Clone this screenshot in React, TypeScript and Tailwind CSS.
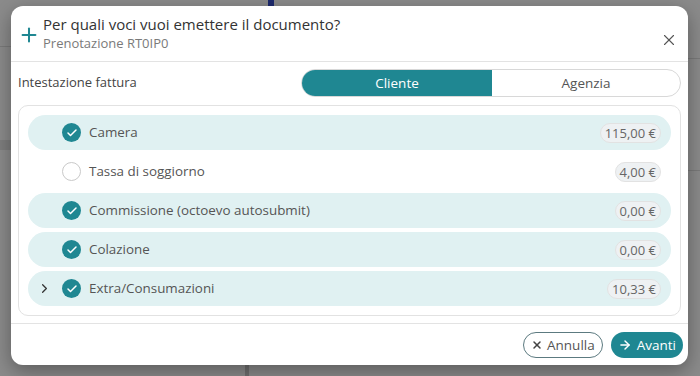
import React from "react";
import { Plus, X, Check, ChevronRight, ArrowRight } from "lucide-react";

const rows = [
  { label: "Camera", price: "115,00 €", checked: true },
  { label: "Tassa di soggiorno", price: "4,00 €", checked: false },
  { label: "Commissione (octoevo autosubmit)", price: "0,00 €", checked: true },
  { label: "Colazione", price: "0,00 €", checked: true },
  { label: "Extra/Consumazioni", price: "10,33 €", checked: true, expandable: true },
];

const App = () => {
  return (
    <div
      className="relative h-[376px] w-[700px] overflow-hidden bg-[#8b8b8b]"
      style={{ fontFamily: "'Open Sans', Lato, sans-serif" }}
    >
      {/* dimmed page behind */}
      <div className="absolute left-[268px] top-0 h-[6px] w-[6px] bg-[#1d2a6e]" />
      <div className="absolute left-[245px] top-[365px] h-[11px] w-[4px] bg-[#6f6f6f]" />
      <div className="absolute left-0 top-[46px] h-[1px] w-[11px] bg-[#7a7a7a]" />
      <div className="absolute left-0 top-[140px] h-[10px] w-[11px] bg-[#7e7e7e]" />
      <div className="absolute right-0 top-[58px] h-[1px] w-[12px] bg-[#7a7a7a]" />
      <div className="absolute right-0 top-[170px] h-[1px] w-[12px] bg-[#7a7a7a]" />

      <div className="absolute left-[11px] top-[6px] flex h-[359px] w-[677px] flex-col rounded-[12px] bg-white shadow-[0_6px_20px_rgba(0,0,0,0.35)]">
        {/* header */}
        <div className="flex h-[55px] items-start px-[7px] pt-[8px]">
          <Plus className="mt-[10px] h-[22px] w-[22px] text-[#1f8792]" strokeWidth={2.2} />
          <div className="ml-[3px] flex flex-col">
            <span className="text-[15px] leading-[20px] text-[#333]">
              Per quali voci vuoi emettere il documento?
            </span>
            <span className="text-[13px] leading-[18px] text-[#7a7a7a]">Prenotazione RT0IP0</span>
          </div>
          <X className="ml-auto mr-[3px] mt-[17px] h-[18px] w-[18px] text-[#555]" strokeWidth={1.5} />
        </div>
        <div className="h-px bg-[#e3e3e3]" />

        {/* intestazione */}
        <div className="flex items-center px-[7px] pt-[7px]">
          <span className="text-[13px] text-[#444]">Intestazione fattura</span>
          <div className="ml-auto flex h-[28px] w-[380px] overflow-hidden rounded-full border border-[#d8d8d8]">
            <div className="flex w-[190px] items-center justify-center bg-[#1f8792] text-[13.5px] text-white">
              Cliente
            </div>
            <div className="flex flex-1 items-center justify-center text-[13.5px] text-[#555]">Agenzia</div>
          </div>
        </div>

        {/* list */}
        <div className="mx-[7px] mt-[8px] flex flex-col gap-[4px] rounded-[10px] border border-[#e2e2e2] px-[9px] py-[9px]">
          {rows.map((r) => (
            <div
              key={r.label}
              className={`flex h-[35px] items-center rounded-full pr-[10px] ${r.checked ? "bg-[#e0f1f2]" : ""}`}
            >
              <div className="flex w-[34px] justify-start pl-[9px]">
                {r.expandable && <ChevronRight className="h-[15px] w-[15px] text-[#333]" strokeWidth={2} />}
              </div>
              {r.checked ? (
                <div className="flex h-[19px] w-[19px] items-center justify-center rounded-full bg-[#1f8792]">
                  <Check className="h-[12px] w-[12px] text-white" strokeWidth={3} />
                </div>
              ) : (
                <div className="h-[19px] w-[19px] rounded-full border-[1.5px] border-[#c9c9c9] bg-white" />
              )}
              <span className="ml-[8px] text-[13.4px] text-[#555]">{r.label}</span>
              <span className="ml-auto rounded-full border border-[#e2e2e2] bg-[#eef1f3] px-[4px] text-[13px] leading-[18px] text-[#666]">
                {r.price}
              </span>
            </div>
          ))}
        </div>

        <div className="mt-[7px] h-px bg-[#e3e3e3]" />

        {/* footer */}
        <div className="flex justify-end gap-[8px] px-[5px] pt-[8px]">
          <button className="flex h-[26px] items-center gap-[4px] rounded-full border border-[#5c7a80] px-[7px] text-[13.5px] text-[#555]">
            <X className="h-[12px] w-[12px] text-[#444]" strokeWidth={3} />
            Annulla
          </button>
          <button className="flex h-[26px] items-center gap-[5px] rounded-full bg-[#1f8792] px-[7px] text-[13.5px] text-white">
            <ArrowRight className="h-[14px] w-[14px]" strokeWidth={2.5} />
            Avanti
          </button>
        </div>
      </div>
    </div>
  );
};

export default App;
